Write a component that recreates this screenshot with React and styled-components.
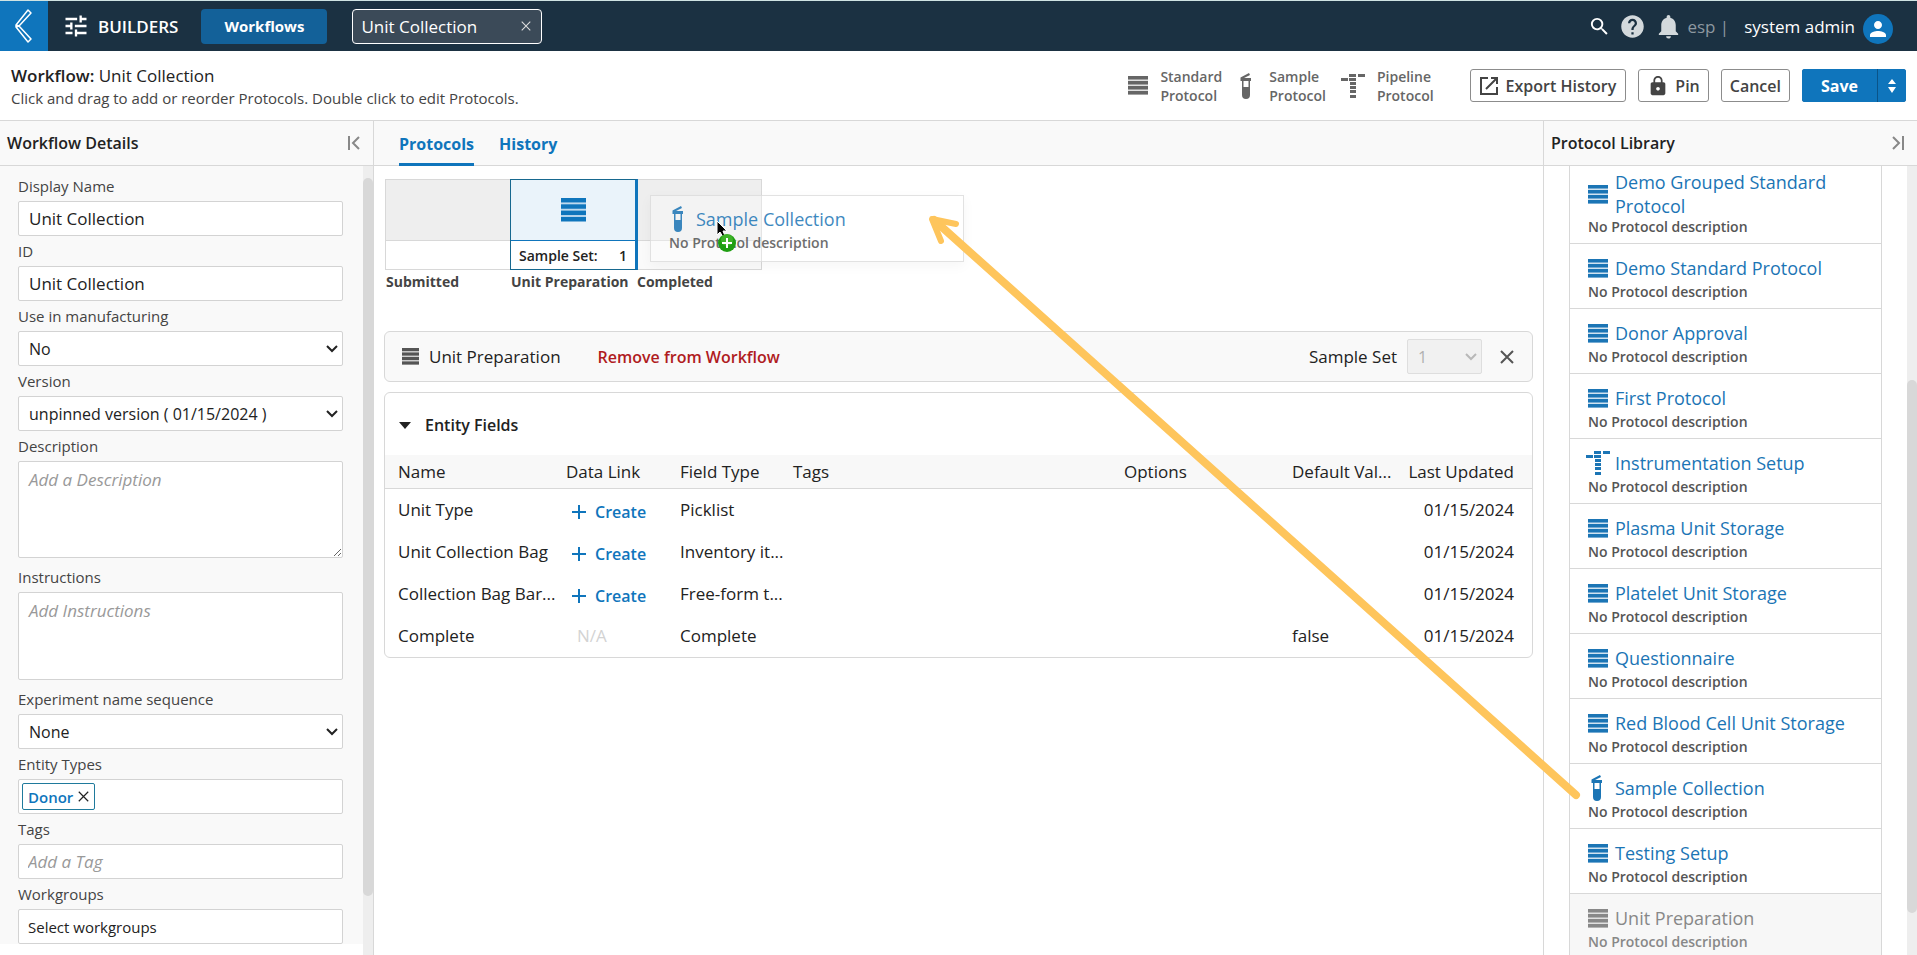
import styled, { createGlobalStyle, css } from "styled-components";
import { MdHelp, MdLock, MdNotifications, MdPerson, MdSearch, MdTune } from "react-icons/md";

const GlobalStyle = createGlobalStyle`
  * { box-sizing: border-box; }
  body {
    margin: 0;
    font-family: "Open Sans", "Noto Sans", sans-serif;
    font-size: 16px;
    color: #222;
    background: #fff;
  }
  button, input, select, textarea { font-family: inherit; }
  svg { display: block; flex: none; }
`;

const protocols = [
    { name: "Demo Grouped Standard Protocol", type: "standard" },
    { name: "Demo Standard Protocol", type: "standard" },
    { name: "Donor Approval", type: "standard" },
    { name: "First Protocol", type: "standard" },
    { name: "Instrumentation Setup", type: "pipeline" },
    { name: "Plasma Unit Storage", type: "standard" },
    { name: "Platelet Unit Storage", type: "standard" },
    { name: "Questionnaire", type: "standard" },
    { name: "Red Blood Cell Unit Storage", type: "standard" },
    { name: "Sample Collection", type: "sample" },
    { name: "Testing Setup", type: "standard" },
    { name: "Unit Preparation", type: "standard", used: true },
];

const entityFields = [
    { name: "Unit Type", link: true, type: "Picklist", value: "", updated: "01/15/2024" },
    { name: "Unit Collection Bag", link: true, type: "Inventory it...", value: "", updated: "01/15/2024" },
    { name: "Collection Bag Bar...", link: true, type: "Free-form t...", value: "", updated: "01/15/2024" },
    { name: "Complete", link: false, type: "Complete", value: "false", updated: "01/15/2024" },
];

const StandardIcon = ({ width = 20, height = 19 }) => (
    <svg width={width} height={height} viewBox="0 0 20 19" preserveAspectRatio="none" fill="currentColor">
        <rect width="20" height="19" opacity="0.2" />
        <rect width="20" height="3.500" />
        <rect y="5" width="20" height="3.500" />
        <rect y="10" width="20" height="3.500" />
        <rect y="15" width="20" height="3.500" />
    </svg>
);

const SampleIcon = () => (
    <svg width="20" height="26" viewBox="0 0 20 26" fill="currentColor">
        <path d="M3.500 4.500 L12 0 L13 2 L7 5 H14 V8 H3.500 Z" />
        <path d="M5 8 H13 V22 a4 4 0 0 1 -8 0 Z M6.500 8 V14 H11.500 V8 Z" fillRule="evenodd" />
    </svg>
);

const PipelineIcon = () => (
    <svg width="24" height="24" viewBox="0 0 24 24" fill="currentColor">
        <rect x="8" y="0" width="7" height="3" />
        <rect x="17" y="0" width="7" height="3" />
        <rect x="0" y="4" width="7" height="3" />
        <rect x="8" y="4" width="7" height="3" />
        <rect x="9" y="8" width="6" height="3" />
        <rect x="9" y="12" width="6" height="3" />
        <rect x="9" y="16" width="6" height="3" />
        <rect x="9" y="21" width="6" height="3" />
    </svg>
);

const ProtocolIcon = ({ type }) => {
    if (type === "sample") return <SampleIcon />;
    if (type === "pipeline") return <PipelineIcon />;
    return <StandardIcon />;
};

const CrossIcon = ({ size = 14, stroke = 2 }) => (
    <svg width={size} height={size} viewBox="0 0 14 14" stroke="currentColor" strokeWidth={stroke}>
        <path d="M1 1 L13 13 M13 1 L1 13" />
    </svg>
);

const CollapseIcon = ({ flip }) => (
    <svg width="14" height="14" viewBox="0 0 14 14" fill="none" stroke="#888" strokeWidth="2">
        {flip ? <path d="M2 1 L8 7 L2 13 M12 0 V14" /> : <path d="M12 1 L6 7 L12 13 M2 0 V14" />}
    </svg>
);

const SelectField = ({ id, value, disabled }) => (
    <SelectWrap>
        <Select id={id} defaultValue={value} disabled={disabled}>
            <option>{value}</option>
        </Select>
        <SelectArrow width="12" height="8" viewBox="0 0 12 8" $disabled={disabled}>
            <path d="M1 1 L6 6 L11 1" />
        </SelectArrow>
    </SelectWrap>
);

const Scrollbar = ({ before, thumb, after }) => (
    <ScrollTrack $rows={`${before}fr ${thumb}fr ${after}fr`}>
        <ScrollThumb />
    </ScrollTrack>
);

const TopBar = () => (
    <Header>
        <BackButton aria-label="Back">
            <svg width="18" height="34" viewBox="0 0 18 34" fill="none" stroke="#fff" strokeWidth="1.500" strokeLinejoin="round">
                <path d="M1 16 L13 1 L16 4 L4 17 L16 30 L13 33 L1 18 Z M1 16 L4 17 L1 18" />
            </svg>
        </BackButton>
        <Brand>
            <MdTune size={28} />
            BUILDERS
        </Brand>
        <WorkflowsButton>Workflows</WorkflowsButton>
        <OpenTab>
            Unit Collection
            <TabClose aria-label="Close Unit Collection">
                <CrossIcon size={10} stroke={1.5} />
            </TabClose>
        </OpenTab>
        <UserArea>
            <HeaderIcons>
                <IconButton aria-label="Search"><MdSearch size={23} color="#fff" /></IconButton>
                <IconButton aria-label="Help"><MdHelp size={27} /></IconButton>
                <IconButton aria-label="Notifications"><MdNotifications size={29} /></IconButton>
            </HeaderIcons>
            <Server>esp&nbsp;|</Server>
            <UserName>system admin</UserName>
            <Avatar><MdPerson size={24} /></Avatar>
        </UserArea>
    </Header>
);

const WorkflowBar = () => (
    <SubHeader>
        <div>
            <Title><b>Workflow:</b> Unit Collection</Title>
            <Hint>Click and drag to add or reorder Protocols. Double click to edit Protocols.</Hint>
        </div>
        <Actions>
            <Legend>
                <LegendItem><StandardIcon /><span>Standard<br />Protocol</span></LegendItem>
                <LegendItem><SampleIcon /><span>Sample<br />Protocol</span></LegendItem>
                <LegendItem><PipelineIcon /><span>Pipeline<br />Protocol</span></LegendItem>
            </Legend>
            <Button $wide>
                <svg width="18" height="18" viewBox="0 0 18 18" fill="none" stroke="currentColor" strokeWidth="2">
                    <path d="M8 1 H1 V17 H17 V10 M11 1 H17 V7 M17 1 L6 12" />
                </svg>
                Export History
            </Button>
            <Button><MdLock size={22} />Pin</Button>
            <Button>Cancel</Button>
            <SaveGroup>
                <SaveButton>Save</SaveButton>
                <SaveMore aria-label="More save options">
                    <svg width="8" height="14" viewBox="0 0 8 14" fill="#fff">
                        <path d="M4 0 L8 5 H0 Z M4 14 L8 8 H0 Z" />
                    </svg>
                </SaveMore>
            </SaveGroup>
        </Actions>
    </SubHeader>
);

const DetailsPanel = () => (
    <LeftPanel>
        <PanelHeader>
            Workflow Details
            <IconButton aria-label="Collapse details"><CollapseIcon /></IconButton>
        </PanelHeader>
        <PanelBody>
            <FormScroll>
                <Form>
                    <Label htmlFor="displayName">Display Name</Label>
                    <Input id="displayName" defaultValue="Unit Collection" />
                    <Label htmlFor="workflowId">ID</Label>
                    <Input id="workflowId" defaultValue="Unit Collection" />
                    <Label htmlFor="manufacturing">Use in manufacturing</Label>
                    <SelectField id="manufacturing" value="No" />
                    <Label htmlFor="version">Version</Label>
                    <SelectField id="version" value="unpinned version ( 01/15/2024 )" />
                    <Label htmlFor="description">Description</Label>
                    <TextArea id="description" $height={97} placeholder="Add a Description" />
                    <Label htmlFor="instructions">Instructions</Label>
                    <TextArea id="instructions" $height={88} $fixed placeholder="Add Instructions" />
                    <Label htmlFor="sequence">Experiment name sequence</Label>
                    <SelectField id="sequence" value="None" />
                    <Label htmlFor="entityTypes">Entity Types</Label>
                    <TagBox>
                        <Tag>Donor <TagRemove aria-label="Remove Donor"><CrossIcon size={11} stroke={1.5} /></TagRemove></Tag>
                        <TagInput id="entityTypes" />
                    </TagBox>
                    <Label htmlFor="tags">Tags</Label>
                    <Input id="tags" placeholder="Add a Tag" $tight />
                    <Label htmlFor="workgroups">Workgroups</Label>
                    <Input id="workgroups" defaultValue="Select workgroups" $tight $small />
                </Form>
            </FormScroll>
            <Scrollbar before={12} thumb={718} after={59} />
        </PanelBody>
    </LeftPanel>
);

const WorkflowCanvas = () => (
    <Canvas>
        <Step>
            <StepBox><StepTop /><StepBottom /></StepBox>
            <StepName>Submitted</StepName>
        </Step>
        <Step $active>
            <StepBox $active>
                <StepTop $active><StandardIcon width={25} height={24} /></StepTop>
                <StepBottom><span>Sample Set:</span><span>1</span></StepBottom>
            </StepBox>
            <StepName>Unit Preparation</StepName>
        </Step>
        <Step>
            <StepBox><StepTop /><StepBottom $shaded /></StepBox>
            <StepName>Completed</StepName>
        </Step>
        <DragCard>
            <ProtocolTitle><IconSlot><SampleIcon /></IconSlot>Sample Collection</ProtocolTitle>
            <ProtocolText>No Protocol description</ProtocolText>
        </DragCard>
        <DragCursor width="24" height="34" viewBox="0 0 24 34">
            <path d="M1 1 V15 L4 12 L7 17 L9 16 L7 11 H11 Z" fill="#000" stroke="#fff" />
            <circle cx="11" cy="23" r="9" fill="#1f9e12" />
            <circle cx="11" cy="20" r="6" fill="#5cc63c" opacity="0.5" />
            <path d="M11 18 V28 M6 23 H16" stroke="#fff" strokeWidth="2" />
        </DragCursor>
    </Canvas>
);

const EntityTable = () => (
    <Card>
        <SectionToggle>
            <svg width="12" height="7" viewBox="0 0 12 7"><path d="M0 0 H12 L6 7 Z" fill="#222" /></svg>
            Entity Fields
        </SectionToggle>
        <Table>
            <colgroup>
                <Col $width="178px" />
                <Col $width="114px" />
                <Col $width="113px" />
                <Col $width="auto" />
                <Col $width="168px" />
                <Col $width="114px" />
                <Col $width="129px" />
            </colgroup>
            <thead>
                <tr>
                    <Th>Name</Th>
                    <Th>Data Link</Th>
                    <Th>Field Type</Th>
                    <Th>Tags</Th>
                    <Th>Options</Th>
                    <Th>Default Val...</Th>
                    <Th>Last Updated</Th>
                </tr>
            </thead>
            <tbody>
                {entityFields.map((field) => (
                    <tr key={field.name}>
                        <Td>{field.name}</Td>
                        <Td>
                            {field.link ? (
                                <CreateButton>
                                    <svg width="14" height="14" viewBox="0 0 14 14" stroke="currentColor" strokeWidth="2">
                                        <path d="M7 0 V14 M0 7 H14" />
                                    </svg>
                                    Create
                                </CreateButton>
                            ) : (
                                <NotAvailable>N/A</NotAvailable>
                            )}
                        </Td>
                        <Td>{field.type}</Td>
                        <Td />
                        <Td />
                        <Td>{field.value}</Td>
                        <Td>{field.updated}</Td>
                    </tr>
                ))}
            </tbody>
        </Table>
    </Card>
);

const CenterPanel = () => (
    <Center>
        <Tabs>
            <TabLink href="#protocols" $active>Protocols</TabLink>
            <TabLink href="#history">History</TabLink>
        </Tabs>
        <CenterBody>
            <WorkflowCanvas />
            <StepBar>
                <StandardIcon width={17} height={17} />
                <StepTitle>Unit Preparation</StepTitle>
                <RemoveButton>Remove from Workflow</RemoveButton>
                <SampleSet>
                    <label htmlFor="sampleSet">Sample Set</label>
                    <SampleSetSelect><SelectField id="sampleSet" value="1" disabled /></SampleSetSelect>
                    <IconButton aria-label="Close"><CrossIcon /></IconButton>
                </SampleSet>
            </StepBar>
            <EntityTable />
        </CenterBody>
    </Center>
);

const LibraryPanel = () => (
    <RightPanel>
        <PanelHeader>
            Protocol Library
            <IconButton aria-label="Collapse library"><CollapseIcon flip /></IconButton>
        </PanelHeader>
        <PanelBody>
            <LibraryList>
                {protocols.map((protocol) => (
                    <LibraryItem key={protocol.name} $used={protocol.used}>
                        <ProtocolTitle $used={protocol.used}>
                            <IconSlot><ProtocolIcon type={protocol.type} /></IconSlot>
                            {protocol.name}
                        </ProtocolTitle>
                        <ProtocolText $used={protocol.used}>No Protocol description</ProtocolText>
                    </LibraryItem>
                ))}
            </LibraryList>
            <Scrollbar before={214} thumb={533} after={42} />
        </PanelBody>
    </RightPanel>
);

const App = () => {
    return (
        <Page>
            <GlobalStyle />
            <TopBar />
            <WorkflowBar />
            <Main>
                <DetailsPanel />
                <CenterPanel />
                <LibraryPanel />
            </Main>
            <DragArrow width="664" height="602" viewBox="0 0 664 602">
                <path d="M12 12 L654 587" strokeWidth="8" />
                <path d="M34 16 L10 11 L19 33" strokeWidth="6" />
            </DragArrow>
        </Page>
    );
};

const Page = styled.div`
    position: relative;
    display: flex;
    flex-direction: column;
    height: 100vh;
    overflow: hidden;
`;

const plainButton = css`
    border: none;
    background: none;
    padding: 0;
    cursor: pointer;
`;

const Header = styled.header`
    display: flex;
    align-items: center;
    height: 51px;
    flex: none;
    background: #1b3142;
    border-top: 1px solid #cfe3e3;
    color: #fff;
`;

const BackButton = styled.button`
    ${plainButton}
    display: flex;
    align-items: center;
    justify-content: center;
    width: 48px;
    align-self: stretch;
    background: #0f75bc;
`;

const Brand = styled.div`
    display: flex;
    align-items: center;
    gap: 8px;
    margin: 0 23px 0 14px;
    font-size: 17px;
    font-weight: 600;
`;

const WorkflowsButton = styled.button`
    ${plainButton}
    width: 126px;
    height: 35px;
    border-radius: 4px;
    background: #136199;
    color: #fff;
    font-size: 15px;
    font-weight: 700;
`;

const OpenTab = styled.div`
    display: flex;
    align-items: center;
    justify-content: space-between;
    width: 190px;
    height: 35px;
    margin-left: 25px;
    padding: 0 10px 0 8px;
    border: 1px solid #fff;
    border-radius: 4px;
    background: #3b4a58;
    font-size: 17px;
`;

const TabClose = styled.button`
    ${plainButton}
    color: #ddd;
`;

const UserArea = styled.div`
    display: flex;
    align-items: center;
    margin-left: auto;
    padding-right: 24px;
    font-size: 17px;
`;

const HeaderIcons = styled.div`
    display: flex;
    align-items: center;
    gap: 8px;
    margin-right: 4px;
`;

const IconButton = styled.button`
    ${plainButton}
    color: #d3d9dc;
`;

const Server = styled.span`
    color: #8d98a0;
`;

const UserName = styled.span`
    margin: 0 8px 0 15px;
`;

const Avatar = styled.span`
    display: flex;
    align-items: center;
    justify-content: center;
    width: 30px;
    height: 30px;
    margin-top: 5px;
    border-radius: 50%;
    background: #0f75bc;
`;

const SubHeader = styled.div`
    display: flex;
    align-items: center;
    justify-content: space-between;
    height: 70px;
    flex: none;
    padding: 0 11px;
    border-bottom: 1px solid #d8d8d8;
`;

const Title = styled.div`
    font-size: 17px;
    line-height: 24px;

    b { font-weight: 600; }
`;

const Hint = styled.div`
    font-size: 15px;
    line-height: 20px;
    color: #444;
`;

const Actions = styled.div`
    display: flex;
    align-items: center;
    gap: 12px;
`;

const Legend = styled.div`
    display: flex;
    gap: 15px;
    margin-right: 24px;
`;

const LegendItem = styled.div`
    display: flex;
    align-items: center;
    gap: 12px;
    font-size: 14px;
    font-weight: 600;
    line-height: 19px;
    color: #666;
`;

const Button = styled.button`
    display: flex;
    align-items: center;
    gap: ${(props) => (props.$wide ? 8 : 6)}px;
    height: 33px;
    padding: 0 ${(props) => (props.$wide ? 9 : 8)}px;
    border: 1px solid #8c8c8c;
    border-radius: 3px;
    background: #fff;
    color: #444;
    font-size: 16px;
    font-weight: 600;
    cursor: pointer;
`;

const SaveGroup = styled.div`
    display: flex;
    gap: 1px;
    height: 33px;
    border-radius: 3px;
    overflow: hidden;
    background: #0a5489;
`;

const SaveButton = styled.button`
    ${plainButton}
    width: 75px;
    background: #0f75bc;
    color: #fff;
    font-size: 16px;
    font-weight: 700;
`;

const SaveMore = styled.button`
    ${plainButton}
    display: flex;
    align-items: center;
    justify-content: center;
    width: 28px;
    background: #0f75bc;
`;

const Main = styled.main`
    display: flex;
    flex: 1;
    min-height: 0;
`;

const LeftPanel = styled.section`
    display: flex;
    flex-direction: column;
    width: 374px;
    flex: none;
    border-right: 1px solid #d8d8d8;
`;

const RightPanel = styled(LeftPanel)`
    border-right: none;
    border-left: 1px solid #d8d8d8;
`;

const PanelHeader = styled.h2`
    display: flex;
    align-items: center;
    justify-content: space-between;
    height: 45px;
    flex: none;
    margin: 0;
    padding: 0 12px 0 7px;
    border-bottom: 1px solid #d8d8d8;
    background: #f9f9f9;
    font-size: 16px;
    font-weight: 600;
`;

const PanelBody = styled.div`
    display: flex;
    flex: 1;
    min-height: 0;
    overflow: hidden;
`;

const FormScroll = styled.div`
    flex: 1;
    overflow: hidden;
`;

const Form = styled.form`
    display: flex;
    flex-direction: column;
    padding: 5px 20px 0 18px;
    background: #f9f9f9;
`;

const Label = styled.label`
    padding: 5px 0;
    font-size: 15px;
    line-height: 20px;
    color: #444;
`;

const fieldBox = css`
    width: 100%;
    height: 35px;
    border: 1px solid #d3d3d3;
    border-radius: 2px;
    background: #fff;
    color: #222;
    font-size: 17px;

    &::placeholder {
        color: #999;
        font-style: italic;
    }
`;

const Input = styled.input`
    ${fieldBox}
    padding: 0 ${(props) => (props.$tight ? 9 : 10)}px;
    font-size: ${(props) => (props.$small ? 15 : 17)}px;
`;

const TextArea = styled.textarea`
    ${fieldBox}
    display: block;
    height: ${(props) => props.$height}px;
    margin-bottom: 4px;
    padding: 6px 10px;
    resize: ${(props) => (props.$fixed ? "none" : "both")};
`;

const SelectWrap = styled.div`
    position: relative;
    width: 100%;
`;

const Select = styled.select`
    ${fieldBox}
    display: block;
    padding: 0 24px 0 10px;
    appearance: none;
    font-size: 16px;

    &:disabled {
        border-color: #dedede;
        background: #f1f1f1;
        color: #b0b0b0;
        opacity: 1;
    }
`;

const SelectArrow = styled.svg`
    position: absolute;
    right: 5px;
    top: 14px;
    fill: none;
    stroke: ${(props) => (props.$disabled ? "#b8b8b8" : "#222")};
    stroke-width: 2;
    pointer-events: none;
`;

const TagBox = styled.div`
    ${fieldBox}
    display: flex;
    align-items: center;
    padding: 0 3px;
`;

const Tag = styled.span`
    display: flex;
    align-items: center;
    gap: 5px;
    height: 27px;
    padding: 0 5px;
    border: 1px solid #1f7a9c;
    border-radius: 2px;
    color: #0f75bc;
    font-size: 15px;
    font-weight: 600;
`;

const TagRemove = styled.button`
    ${plainButton}
    color: #222;
`;

const TagInput = styled.input`
    flex: 1;
    min-width: 0;
    border: none;
    outline: none;
`;

const ScrollTrack = styled.div`
    display: grid;
    grid-template-rows: ${(props) => props.$rows};
    width: 10px;
    flex: none;
    background: #eee;
`;

const ScrollThumb = styled.div`
    grid-row: 2;
    border-radius: 5px;
    background: #d8d8d8;
`;

const Center = styled.section`
    display: flex;
    flex-direction: column;
    flex: 1;
    min-width: 0;
`;

const Tabs = styled.nav`
    display: flex;
    gap: 25px;
    height: 45px;
    flex: none;
    padding-left: 25px;
    border-bottom: 1px solid #d8d8d8;
    background: #f9f9f9;
`;

const TabLink = styled.a`
    height: 45px;
    border-bottom: 3px solid ${(props) => (props.$active ? "#0f75bc" : "transparent")};
    color: #0f75bc;
    font-size: 16px;
    font-weight: 700;
    line-height: 46px;
    text-decoration: none;
`;

const CenterBody = styled.div`
    display: flex;
    flex-direction: column;
    gap: 10px;
    padding: 13px 10px 0 10px;
`;

const Canvas = styled.div`
    position: relative;
    display: flex;
    height: 142px;
    padding-left: 1px;
`;

const Step = styled.div`
    width: ${(props) => (props.$active ? 126 : 125)}px;
`;

const StepBox = styled.div`
    display: flex;
    flex-direction: column;
    width: 126px;
    height: 91px;
    border: 1px solid #d8d8d8;
    ${(props) =>
        props.$active &&
        css`
            position: relative;
            z-index: 1;
            width: 128px;
            border-color: #17688f;
            border-right: 3px solid #0f75bc;
        `}
`;

const StepTop = styled.div`
    display: flex;
    align-items: center;
    justify-content: center;
    flex: 1;
    border-bottom: 1px solid ${(props) => (props.$active ? "#0f75bc" : "#d8d8d8")};
    background: ${(props) => (props.$active ? "#eaf3fa" : "#eee")};
    color: #0f75bc;
`;

const StepBottom = styled.div`
    display: flex;
    align-items: center;
    justify-content: space-between;
    height: 28px;
    padding: 0 8px;
    background: ${(props) => (props.$shaded ? "#fafafa" : "#fff")};
    font-size: 14px;
    font-weight: 600;
`;

const StepName = styled.div`
    padding: 2px 0 0 1px;
    font-size: 14px;
    font-weight: 700;
    line-height: 20px;
    white-space: nowrap;
    color: #444;
`;

const DragCard = styled.div`
    position: absolute;
    left: 266px;
    top: 16px;
    z-index: 2;
    width: 314px;
    height: 67px;
    padding: 8px 18px;
    border: 1px solid #ddd;
    background: rgba(255, 255, 255, 0.4);
    box-shadow: 0 4px 12px rgba(0, 0, 0, 0.04);
    opacity: 0.85;
`;

const DragCursor = styled.svg`
    position: absolute;
    left: 332px;
    top: 41px;
    z-index: 3;
`;

const StepBar = styled.div`
    display: flex;
    align-items: center;
    height: 51px;
    padding: 0 18px 0 17px;
    border: 1px solid #d8d8d8;
    border-radius: 6px;
    background: #f9f9f9;
    color: #555;
`;

const StepTitle = styled.span`
    margin: 0 37px 0 10px;
    color: #222;
    font-size: 17px;
`;

const RemoveButton = styled.button`
    ${plainButton}
    color: #b01c1f;
    font-size: 16px;
    font-weight: 600;
`;

const SampleSet = styled.div`
    display: flex;
    align-items: center;
    gap: 10px;
    margin-left: auto;
    color: #222;
    font-size: 17px;

    ${IconButton} { color: #555; }
`;

const SampleSetSelect = styled.div`
    width: 75px;
    margin-right: 8px;
`;

const Card = styled.div`
    border: 1px solid #d8d8d8;
    border-radius: 6px;
    padding-bottom: 1px;
`;

const SectionToggle = styled.button`
    ${plainButton}
    display: flex;
    align-items: center;
    gap: 14px;
    height: 62px;
    padding: 2px 14px 0;
    color: #222;
    font-size: 16px;
    font-weight: 600;
`;

const Table = styled.table`
    width: 100%;
    table-layout: fixed;
    border-collapse: collapse;
`;

const Col = styled.col`
    width: ${(props) => props.$width};
`;

const cell = css`
    padding: 0 3px;
    text-align: left;
    white-space: nowrap;
    font-size: 17px;
    font-weight: 400;

    &:first-child { padding-left: 13px; }
    &:last-child { padding-left: 0; padding-right: 18px; text-align: right; }
`;

const Th = styled.th`
    ${cell}
    height: 33px;
    border-bottom: 1px solid #d8d8d8;
    background: #f8f8f8;
`;

const Td = styled.td`
    ${cell}
    height: 42px;
`;

const CreateButton = styled.button`
    ${plainButton}
    display: flex;
    align-items: center;
    gap: 9px;
    padding: 6px 0 0 6px;
    color: #0f75bc;
    font-size: 16px;
    font-weight: 600;
`;

const NotAvailable = styled.span`
    padding-left: 11px;
    color: #d3d3d3;
`;

const LibraryList = styled.ul`
    flex: 1;
    height: max-content;
    margin: -9px 25px 0;
    padding: 0;
    list-style: none;
    border: 1px solid #d8d8d8;
    border-top: none;
`;

const LibraryItem = styled.li`
    padding: 9px 18px 7px;
    background: ${(props) => (props.$used ? "#f7f7f7" : "#fff")};

    &:first-child { padding-top: 13px; }
    & + & { border-top: 1px solid #d8d8d8; }
`;

const ProtocolTitle = styled.div`
    display: flex;
    align-items: center;
    gap: 7px;
    min-height: 30px;
    color: ${(props) => (props.$used ? "#888" : "#1b75b5")};
    font-size: 18px;
    font-weight: 500;
    line-height: 24px;
`;

const IconSlot = styled.span`
    display: flex;
    justify-content: center;
    width: 20px;
    flex: none;
`;

const ProtocolText = styled.div`
    color: ${(props) => (props.$used ? "#888" : "#555")};
    font-size: 14px;
    font-weight: 600;
    line-height: 18px;
`;

const DragArrow = styled.svg`
    position: absolute;
    left: 922px;
    top: 208px;
    z-index: 5;
    fill: none;
    stroke: #fec55c;
    stroke-linecap: round;
    stroke-linejoin: round;
    pointer-events: none;
`;

export default App;
